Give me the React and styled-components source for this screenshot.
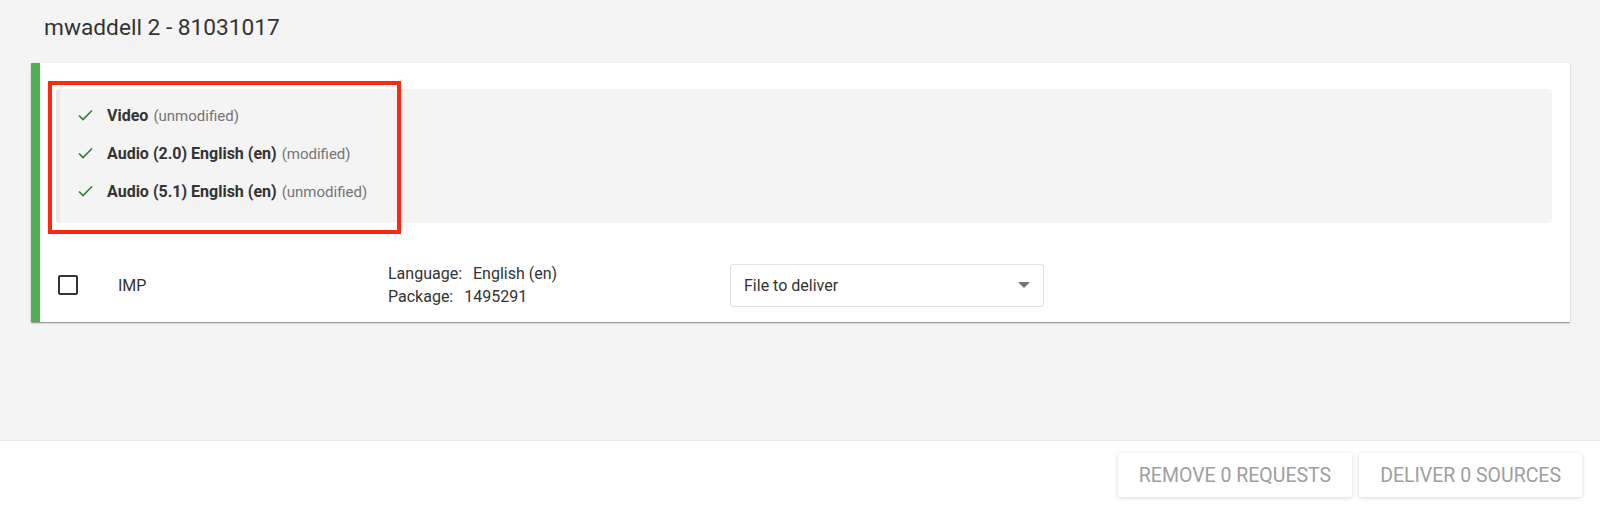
import React from 'react';
import styled, { createGlobalStyle } from 'styled-components';

const Global = createGlobalStyle`
    html, body {
        margin: 0;
        padding: 0;
        background: #fff;
        font-family: Roboto, "Liberation Sans", Arial, sans-serif;
        color: #333;
    }
    * { box-sizing: border-box; }
`;

const Page = styled.div`
    display: flex;
    flex-direction: column;
    height: 505px;
    width: 1600px;
`;

const Main = styled.div`
    height: 440px;
    background: #f4f4f4;
    padding: 0 30px 0 31px;
`;

const Title = styled.h1`
    margin: 0 0 22px;
    padding: 15px 0 0 13px;
    font-size: 22.7px;
    line-height: 26px;
    font-weight: 400;
    color: #333;
`;

const Card = styled.div`
    position: relative;
    background: #fff;
    border-left: 9px solid #4caf50;
    padding: 26px 18px 14px 16px;
    box-shadow: 0 2px 1px -1px rgba(0,0,0,.2), 0 1px 1px 0 rgba(0,0,0,.14), 0 1px 3px 0 rgba(0,0,0,.12);
`;

const Tracks = styled.div`
    background: #f4f4f4;
    border-left: 4px solid #e8e8e8;
    border-radius: 4px;
    padding: 7px 0 13px 18px;
`;

const Track = styled.div`
    display: flex;
    align-items: center;
    gap: 14px;
    height: 38px;
    font-size: 16px;
`;

const TrackName = styled.span`
    font-weight: 700;
    color: #333;
`;

const TrackState = styled.span`
    font-size: 15px;
    color: #757575;
    margin-left: 5px;
`;

const Highlight = styled.div`
    position: absolute;
    left: 8px;
    top: 18px;
    width: 353px;
    height: 153px;
    border: 4px solid #fe2712;
    pointer-events: none;
`;

const Row = styled.div`
    display: flex;
    align-items: center;
    margin-top: 39px;
    padding-left: 2px;
    font-size: 16px;
    color: #333;
`;

const Checkbox = styled.span`
    width: 20px;
    height: 20px;
    border: 2px solid #333;
    border-radius: 2px;
    flex: none;
`;

const Kind = styled.div`
    width: 270px;
    margin-left: 40px;
`;

const Info = styled.div`
    width: 342px;
    line-height: 23px;
`;

const Label = styled.span`
    margin-right: 11px;
`;

const Select = styled.div`
    width: 314px;
    height: 43px;
    border: 1px solid #e0e0e0;
    border-radius: 3px;
    display: flex;
    align-items: center;
    justify-content: space-between;
    padding: 0 13px 0 13px;
    font-size: 16px;
    color: #333;
`;

const Caret = styled.span`
    width: 0;
    height: 0;
    border-left: 6px solid transparent;
    border-right: 6px solid transparent;
    border-top: 6px solid #757575;
`;

const Footer = styled.div`
    flex: 1;
    border-top: 1px solid #e6e6e6;
    display: flex;
    justify-content: flex-end;
    align-items: flex-start;
    gap: 7px;
    padding: 12px 18px 0 0;
`;

const Button = styled.button`
    height: 44px;
    padding: 0 21px;
    border: none;
    border-radius: 2px;
    background: #fff;
    color: #9e9e9e;
    font-family: Roboto, "Liberation Sans", Arial, sans-serif;
    font-size: 19.5px;
    text-transform: uppercase;
    box-shadow: 0 1px 4px rgba(0,0,0,.16);
`;

const Check = () => (
    <svg width="15" height="12" viewBox="0 0 15 12">
        <path d="M1 6.5 L5 10.5 L14 1.5" fill="none" stroke="#2e7d32" strokeWidth="1.6" />
    </svg>
);

const tracks = [
    { name: 'Video', state: 'unmodified' },
    { name: 'Audio (2.0) English (en)', state: 'modified' },
    { name: 'Audio (5.1) English (en)', state: 'unmodified' },
];

const App = () => {
    return (
        <>
            <Global />
            <Page>
                <Main>
                    <Title>mwaddell 2 - 81031017</Title>
                    <Card>
                        <Tracks>
                            {tracks.map((t, i) => (
                                <Track key={i}>
                                    <Check />
                                    <span>
                                        <TrackName>{t.name}</TrackName>
                                        <TrackState>({t.state})</TrackState>
                                    </span>
                                </Track>
                            ))}
                        </Tracks>
                        <Highlight />
                        <Row>
                            <Checkbox />
                            <Kind>IMP</Kind>
                            <Info>
                                <div><Label>Language:</Label>English (en)</div>
                                <div><Label>Package:</Label>1495291</div>
                            </Info>
                            <Select>
                                File to deliver
                                <Caret />
                            </Select>
                        </Row>
                    </Card>
                </Main>
                <Footer>
                    <Button>Remove 0 requests</Button>
                    <Button>Deliver 0 sources</Button>
                </Footer>
            </Page>
        </>
    );
};

export default App;
